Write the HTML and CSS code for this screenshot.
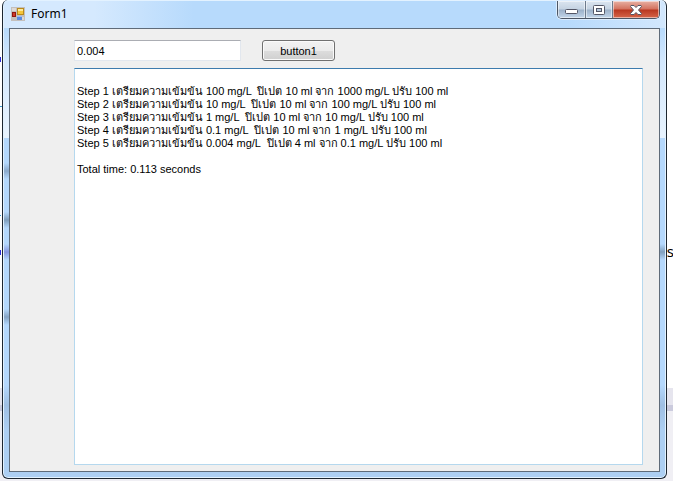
FILE: index.html
```
<!DOCTYPE html>
<html lang="th">
<head>
  <meta charset="UTF-8">
  <meta name="viewport" content="width=device-width, initial-scale=1.0">
  <title>Form1</title>
  <link rel="stylesheet" href="styles.css">
</head>
<body>
  <span class="behind-text">s</span>

  <div class="window">
    <header class="title-bar">
      <svg class="app-icon" width="14" height="14" viewBox="0 0 14 14" aria-hidden="true">
        <rect width="14" height="14" fill="#c3bfbc"/>
        <path d="M1 1h4v3H1zM6 10h7v3H6z" fill="#ded9d5"/>
        <rect x="6.500" y="1.500" width="6" height="6" fill="#f5c53a" stroke="#b98a1c"/>
        <path d="M7 2h5v2H7z" fill="#fdea9c"/>
        <rect x="1.500" y="5.500" width="3" height="4" fill="#cf3b28" stroke="#8f1712"/>
        <rect x="6" y="9" width="5" height="4" fill="#5b8be0"/>
        <path d="M6 9h5v1H6z" fill="#9dbcf0"/>
      </svg>
      <h1 class="title">Form1</h1>
      <div class="window-buttons">
        <button type="button" class="min" aria-label="Minimize">
          <svg width="13" height="6" viewBox="0 0 13 6"><rect x=".5" y=".5" width="12" height="4" rx="1" fill="#fff" stroke="#535666"/></svg>
        </button>
        <button type="button" class="max" aria-label="Maximize">
          <svg width="12" height="10" viewBox="0 0 12 10"><rect x=".5" y=".5" width="11" height="9" rx="1" fill="#fff" stroke="#535666"/><rect x="3.500" y="3.500" width="5" height="3" fill="#b5c8db" stroke="#535666"/></svg>
        </button>
        <button type="button" class="close" aria-label="Close">
          <svg width="12" height="10" viewBox="0 0 12 10"><path d="M1 .5h3l2 2 2-2h3l.5 1L8.500 5l3 3.500-.5 1H8l-2-2-2 2H1l-.5-1L3.500 5l-3-3.500z" fill="#fff" stroke="#535666"/></svg>
        </button>
      </div>
    </header>

    <main class="client">
      <form class="controls">
        <input type="text" class="value" value="0.004" aria-label="Value">
        <button type="button" class="run">button1</button>
      </form>
      <textarea class="output" wrap="off" spellcheck="false" aria-label="Output">

Step 1 เตรียมความเข้มข้น 100 mg/L  ปิเปต 10 ml จาก 1000 mg/L ปรับ 100 ml
Step 2 เตรียมความเข้มข้น 10 mg/L  ปิเปต 10 ml จาก 100 mg/L ปรับ 100 ml
Step 3 เตรียมความเข้มข้น 1 mg/L  ปิเปต 10 ml จาก 10 mg/L ปรับ 100 ml
Step 4 เตรียมความเข้มข้น 0.1 mg/L  ปิเปต 10 ml จาก 1 mg/L ปรับ 100 ml
Step 5 เตรียมความเข้มข้น 0.004 mg/L  ปิเปต 4 ml จาก 0.1 mg/L ปรับ 100 ml

Total time: 0.113 seconds</textarea>
    </main>
  </div>
</body>
</html>
```

FILE: styles.css
```
* {
  box-sizing: border-box;
}

body {
  margin: 0;
  padding: 0 6px 2px 2px;
  height: 100vh;
  display: flex;
  overflow: hidden;
  position: relative;
  background:
    linear-gradient(#2b2bd8, #2b2bd8) 0 57px / 1px 5px no-repeat,
    linear-gradient(#3d9bd0, #3d9bd0) 0 106px / 2px 1px no-repeat,
    linear-gradient(#3d9bd0, #3d9bd0) 0 215px / 1px 1px no-repeat,
    linear-gradient(#2b2bd8, #2b2bd8) 0 250px / 1px 5px no-repeat,
    linear-gradient(#fff 388px, #e6e5ee 388px, #e6e5ee 405px, #cbcbdd 405px, #cbcbdd 411px, #f0eff4 411px);
  font-family: "Liberation Sans", Arial, sans-serif;
  font-size: 11px;
  color: #000;
}

/* text of the editor behind the window */
.behind-text {
  position: absolute;
  right: -1px;
  top: 242px;
  font-family: "Noto Sans", sans-serif;
  font-size: 15px;
  line-height: 18px;
}

/* glass frame, with the blurred marks that shine through its edges */
.window {
  flex: 1;
  display: flex;
  flex-direction: column;
  position: relative;
  padding: 0 6px 6px;
  border: 1px solid #1d2630;
  border-top: 0;
  border-radius: 6px;
  box-shadow: inset 0 0 0 1px #e3f2ff;
  background:
    linear-gradient(transparent, #8ba9cb, transparent) 0 163px / 6px 16px no-repeat,
    linear-gradient(transparent, #809fbd, transparent) 0 212px / 6px 16px no-repeat,
    linear-gradient(transparent, #8796e0, transparent) 0 244px / 6px 16px no-repeat,
    linear-gradient(transparent, #85a3c4, transparent) 0 309px / 6px 16px no-repeat,
    linear-gradient(transparent, #809fbd, transparent) 100% 244px / 6px 16px no-repeat,
    linear-gradient(#b7dafc 28px, #d2e7fd 60px, #e8f3fe 138px, #b5d8fc 138px, #b5d8fc 385px, #9fbfe3 405px, #adcff3 430px);
}

.title-bar {
  display: flex;
  align-items: flex-start;
  height: 28px;
  margin: 0 -5px;
  padding: 0 5px 0 7px;
  border-top: 1px solid #e3f2ff;
  border-radius: 5px 5px 0 0;
  background: linear-gradient(to right, #d5e9fe, #d5e9fe 90px, #b7dafc 190px, #b7dafc 85%, #d2e7fd);
}

.app-icon {
  margin-top: 6px;
}

.title {
  flex: 1;
  margin: 5px 0 0 6px;
  font-family: "Noto Sans", sans-serif;
  font-size: 12px;
  font-weight: normal;
  line-height: 16px;
}

.window-buttons {
  display: flex;
  border: 1px solid #4c5665;
  border-top: 0;
  border-radius: 0 0 5px 5px;
  overflow: hidden;
  box-shadow: 0 0 0 1px #dcedff;
}

.window-buttons button {
  display: flex;
  align-items: center;
  justify-content: center;
  height: 17px;
  padding: 0;
  border: 0;
  background: linear-gradient(#dbe5f0, #c5d3e2 8px, #9cb1c9 9px, #c3d6ea);
  box-shadow: inset 0 0 0 1px rgba(255, 255, 255, 0.5);
}

.window-buttons .min {
  width: 28px;
  padding-top: 4px;
  border-right: 1px solid #6c7a8c;
}

.window-buttons .max {
  width: 27px;
  border-right: 1px solid #6c7a8c;
}

.window-buttons .close {
  width: 46px;
  background: linear-gradient(#e8b1a4, #d3725f 8px, #b93720 9px, #d6664a);
}

.client {
  flex: 1;
  display: flex;
  flex-direction: column;
  gap: 7px;
  padding: 11px 16px 6px 64px;
  border: 1px solid #5f6b79;
  background: #efefef;
}

.controls {
  display: flex;
  gap: 21px;
  height: 21px;
}

.value {
  width: 167px;
  height: 21px;
  padding: 0 2px;
  border: 1px solid #e2e7ee;
  border-top-color: #abadb3;
  background: #fff;
  font: inherit;
}

.run {
  width: 73px;
  height: 21px;
  padding: 0;
  border: 1px solid #707070;
  border-radius: 3px;
  background: linear-gradient(#f2f2f2, #ebebeb 50%, #dddddd 50%, #cfcfcf);
  box-shadow: inset 0 0 0 1px #fafafa;
  font: inherit;
  color: inherit;
}

.output {
  flex: 1;
  width: 100%;
  padding: 3px 2px;
  border: 1px solid #b5d8ee;
  border-top-color: #3d7bad;
  outline: 0;
  resize: none;
  overflow: hidden;
  background: #fff;
  font: inherit;
  line-height: 13px;
  color: inherit;
}
```
